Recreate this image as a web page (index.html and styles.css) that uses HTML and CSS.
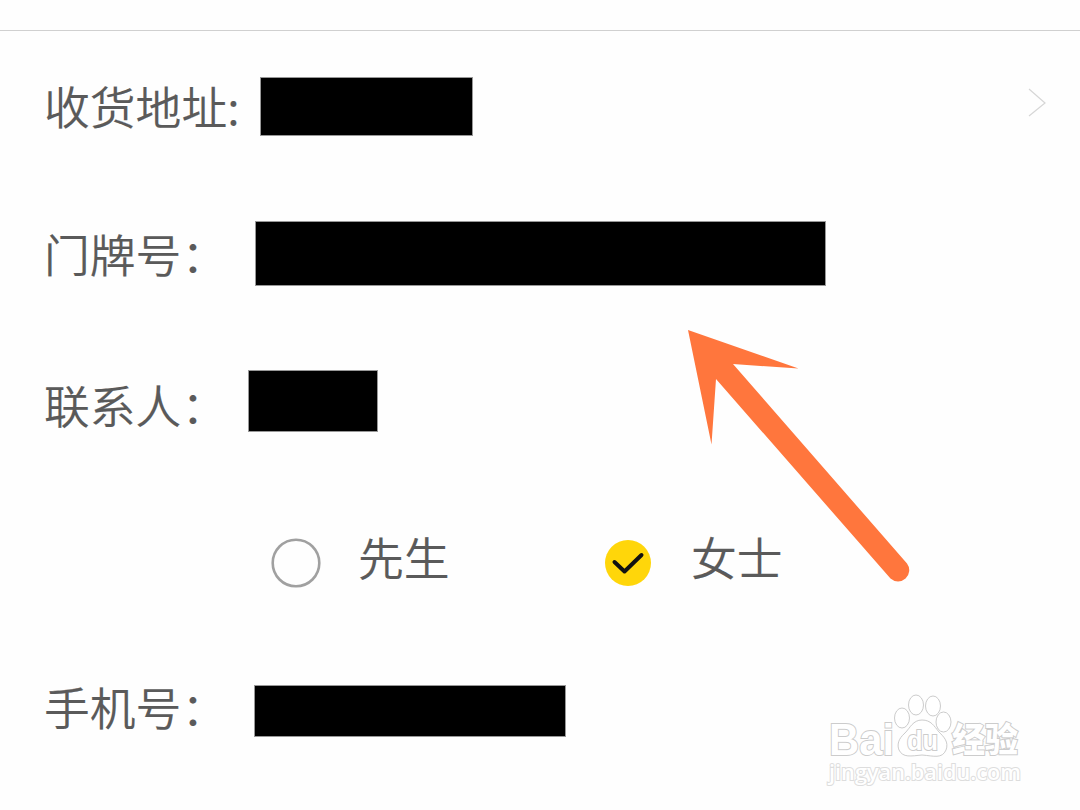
FILE: index.html
```
<!doctype html>
<html lang="zh-CN">
<head>
    <meta charset="UTF-8">
    <title>收货地址</title>
    <link rel="stylesheet" href="styles.css">
</head>
<body>
  <div class="wrap">
    <div class="top"></div>
    <ul class="form">
      <li class="address">
        <span class="name">收货地址:</span>
        <span class="mask"></span>
        <svg class="more" width="20" height="32" viewBox="0 0 20 32"><path d="M1 3L17 17L1 30"/></svg>
      </li>
      <li class="door">
        <span class="name">门牌号：</span>
        <span class="mask"></span>
      </li>
      <li class="contact">
        <span class="name">联系人：</span>
        <span class="mask"></span>
      </li>
      <li class="sex">
        <svg class="radio" width="50" height="50" viewBox="0 0 50 50"><circle cx="25" cy="25" r="23.3"/></svg>
        <span class="name">先生</span>
        <svg class="radio on" width="50" height="50" viewBox="0 0 50 50"><circle cx="25" cy="25" r="23"/><path d="M11.500 24L21.500 33.500L38.500 17"/></svg>
        <span class="name">女士</span>
      </li>
      <li class="phone">
        <span class="name">手机号：</span>
        <span class="mask"></span>
      </li>
    </ul>

    <!-- 箭头 -->
    <svg class="arrow" width="240" height="270" viewBox="0 0 240 270">
      <path d="M8 10L118.500 48.500L53 44L227 243.500A11.200 11.200 0 0 1 210.500 258.500L36 59L31.500 124.500Z"/>
    </svg>

    <!-- 水印 -->
    <svg class="logo" width="220" height="110" viewBox="0 0 220 110">
      <text class="en" x="14" y="69.500" textLength="65" lengthAdjust="spacingAndGlyphs">Bai</text>
      <ellipse cx="87" cy="33" rx="7.500" ry="10"/>
      <ellipse cx="101" cy="20" rx="7.500" ry="10"/>
      <ellipse cx="118" cy="21" rx="7.500" ry="10"/>
      <ellipse cx="128.500" cy="37" rx="7.500" ry="10"/>
      <path d="M107 35C98 35 95 43 90 48C83 54 82 60 84 65C88 73 96 71 107 70C119 71 127 74 131 65C134 57 129 52 124 47C119 41 116 35 107 35Z"/>
      <text class="du" x="92" y="65" textLength="31" lengthAdjust="spacingAndGlyphs">du</text>
      <text class="cn" x="137" y="67" textLength="66" lengthAdjust="spacingAndGlyphs">经验</text>
      <text class="url" x="14" y="95" textLength="192" lengthAdjust="spacingAndGlyphs">jingyan.baidu.com</text>
    </svg>
  </div>
</body>
</html>
```
FILE: styles.css
```
*{margin:0;
  padding:0;
  list-style:none;}
body{background:#fefefe;
     font-family:"Noto Sans CJK SC",sans-serif;}
.wrap{position:relative;
      width:1080px;
      height:810px;
      overflow:hidden;}
.top{height:30px;
     border-bottom:1px solid #d0d0d0;}
.form li{display:flex;
         align-items:flex-start;
         height:151px;
         padding-left:44px;}
.name{width:204px;
      margin-top:37px;
      font-size:45.8px;
      line-height:68px;
      font-weight:350;
      color:#5a5a5a;
      -webkit-text-stroke:0.15px #5a5a5a;
      white-space:nowrap;}
.address .name{margin-top:40px;}
.form .sex .name{margin-top:38px;}
.mask{background:#000;
      box-shadow:0 0 0 1px rgba(0,0,0,0.4);}
.address .mask{width:211px; height:57px; margin:47px 0 0 13px;}
.door .mask{width:569px; height:63px; margin:40px 0 0 8px;}
.contact .mask{width:128px; height:60px; margin:38px 0 0 1px;}
.phone .mask{width:310px; height:50px; margin:51px 0 0 7px;}
.more{margin:55px 32px 0 auto;
      fill:none;
      stroke:#d6d6d6;
      stroke-width:1.2;}
.form .sex{padding-left:271px;}
.sex .name{width:92px; margin-left:37px;}
.radio{margin-top:54px;
       fill:none;
       stroke:#a0a0a0;
       stroke-width:2.6;}
.on{margin-left:153px;}
.form .sex .on + .name{margin-left:38px;}
.on circle{fill:#ffd60a; stroke:none;}
.on path{stroke:#111;
         stroke-width:4;
         stroke-linecap:round;
         stroke-linejoin:round;}
.arrow{position:absolute;
       left:680px;
       top:320px;
       fill:#ff763d;}
.logo{position:absolute;
      left:815px;
      top:685px;
      fill:#fff;
      stroke:#ccc;
      stroke-width:1;}
.logo text{paint-order:stroke;
           stroke-width:2;
           font-family:"Liberation Sans",Arial,sans-serif;}
.logo .en{font-size:45px; font-weight:bold;}
.logo .du{font-size:27px; font-weight:bold;}
.logo .cn{font-family:"Noto Sans CJK SC",sans-serif;
          font-size:34px;
          font-weight:900;}
.logo .url{font-family:"Open Sans",sans-serif;
           font-size:22px;
           font-weight:600;
           stroke:#ddd;}
```
